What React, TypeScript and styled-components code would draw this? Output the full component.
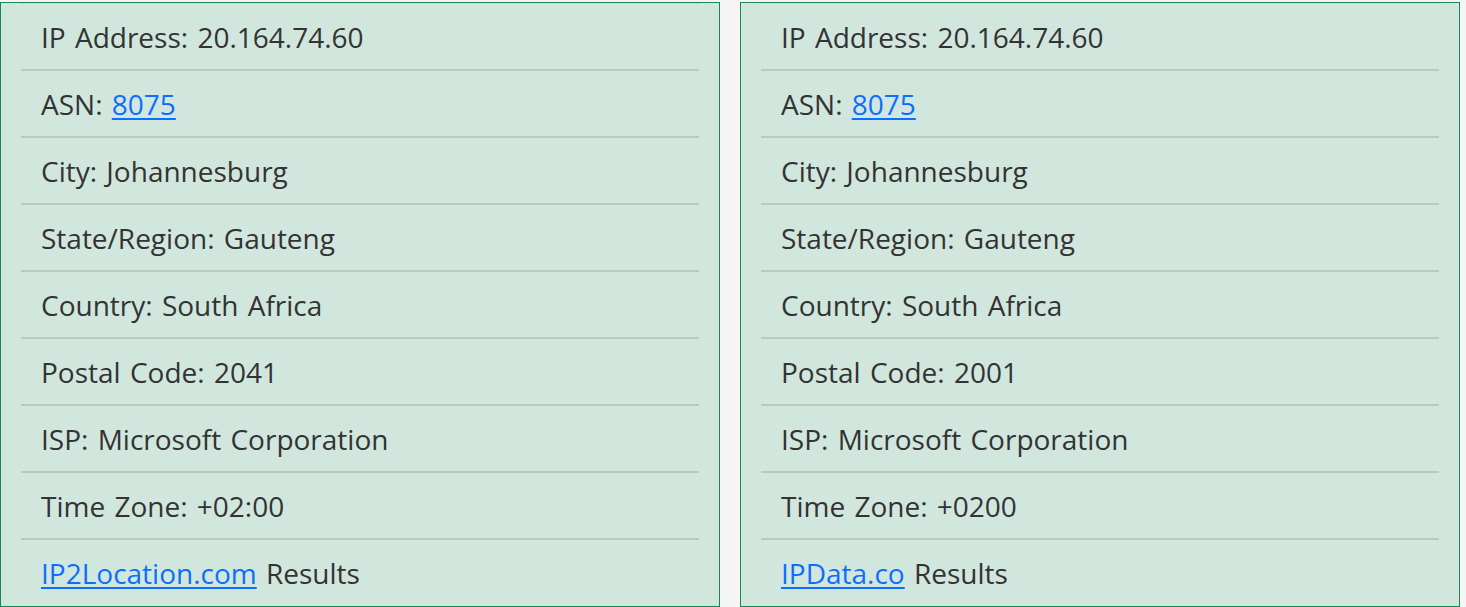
import React from "react";
import styled, { createGlobalStyle } from "styled-components";

const Global = createGlobalStyle`
  html, body { margin: 0; padding: 0; background: #f5f5f5; }
  body { font-family: "Open Sans", "Noto Sans", sans-serif; }
`;

const Page = styled.div`
  display: flex;
  gap: 20px;
  padding-top: 2px;
`;

const Panel = styled.section`
  width: 720px;
  box-sizing: border-box;
  background: #d1e7dd;
  border: 1px solid #198754;
  padding: 0 20px 1px;
`;

const List = styled.ul`
  list-style: none;
  margin: 0;
  padding: 0;
  border-top: 1px solid #c6dad1;
`;

const Row = styled.li`
  height: 65px;
  box-sizing: content-box;
  display: flex;
  align-items: center;
  padding: 0 20px;
  font-size: 28px;
  word-spacing: 2px;
  color: #333333;
  border-bottom: 2px solid #bacac2;
  white-space: pre;
  &:last-child { border-bottom: none; }
`;

const Link = styled.a`
  color: #0d6efd;
  text-decoration: underline;
  text-underline-offset: 3px;
  text-decoration-thickness: 2px;
`;

type Info = {
  asn: string;
  city: string;
  region: string;
  country: string;
  postal: string;
  isp: string;
  tz: string;
  source: string;
};

const data: Info[] = [
  { asn: "8075", city: "Johannesburg", region: "Gauteng", country: "South Africa", postal: "2041", isp: "Microsoft Corporation", tz: "+02:00", source: "IP2Location.com" },
  { asn: "8075", city: "Johannesburg", region: "Gauteng", country: "South Africa", postal: "2001", isp: "Microsoft Corporation", tz: "+0200", source: "IPData.co" },
];

const Card: React.FC<{ info: Info }> = ({ info }) => (
  <Panel>
    <List>
      <Row>IP Address: 20.164.74.60</Row>
      <Row>ASN: <Link href="#">{info.asn}</Link></Row>
      <Row>City: {info.city}</Row>
      <Row>State/Region: {info.region}</Row>
      <Row>Country: {info.country}</Row>
      <Row>Postal Code: {info.postal}</Row>
      <Row>ISP: {info.isp}</Row>
      <Row>Time Zone: {info.tz}</Row>
      <Row><Link href="#">{info.source}</Link> Results</Row>
    </List>
  </Panel>
);

export default function App() {
  return (
    <>
      <Global />
      <Page>
        {data.map((d, i) => (
          <Card key={i} info={d} />
        ))}
      </Page>
    </>
  );
}
